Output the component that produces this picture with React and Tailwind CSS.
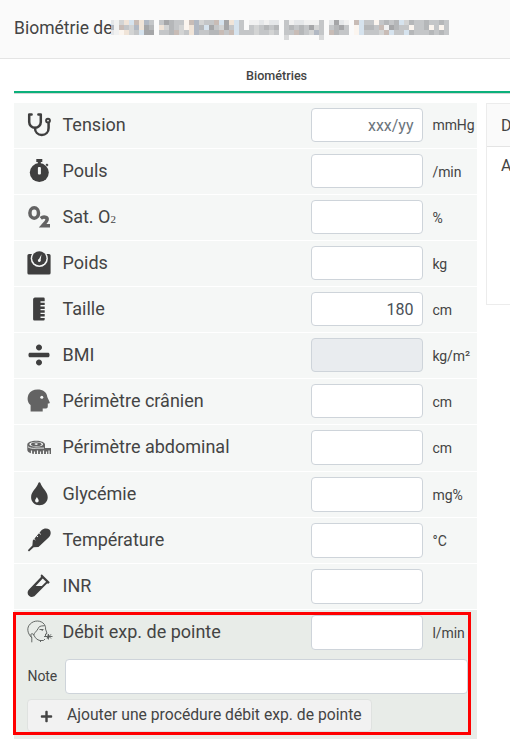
import React from 'react';
import { FaDivide, FaPlus } from 'react-icons/fa';

// Pixelated patient name, one letter per 5px cell
const mosaicColors = {
    a: '#f1f1f1', b: '#e5e7e9', c: '#d3d4d4', d: '#c4c6c8', e: '#b5b7b9', f: '#a5a6a8',
    p: '#f0e4d8', u: '#d6e3ee', t: '#c8bcb6', n: '#b1b8c3', w: '#fbf5ef',
};

const mosaic = [
    'acputpnd.dfeddwtncddtufpud.aababb.dabbaaad.bfba.tuddwdedeuceddedded',
    'atdcnpfe.pcedcwpneufdcfdud.dcdede.dededfcd.defd.wueedtafeddwddewdwd',
    'awpcduff.ddetcdpnddeetdtudddcddcd.ddtedcnd.tedd.wudddctudduedddeded',
];

const icons = {
    tension: (
        <svg width="24" height="24" viewBox="0 0 24 24" fill="none" stroke="currentColor" strokeWidth="2.5" strokeLinecap="round" strokeLinejoin="round">
            <path d="M4.600 1.500H2.200V9a5.800 5.800 0 0 0 11.600 0V1.500h-2.400" />
            <path d="M8 15c0 4 2.800 7 6.800 7s6.800-3 6.800-7v-4.500" />
            <circle cx="21" cy="7.600" r="1.900" strokeWidth="2" />
        </svg>
    ),
    pouls: (
        <svg width="24" height="24" viewBox="0 0 24 24" fill="currentColor">
            <path d="M9.300 0h6v3h-1.500v2h-3V3H9.300z" />
            <path d="m18.600 5.500 1.400-1 1.500 1.600-1.500 1.500z" />
            <circle cx="12.300" cy="13.600" r="9.500" />
            <rect x="10.900" y="8" width="3" height="7.500" rx="1" fill="#f5f7f6" />
        </svg>
    ),
    oxygen: (
        <svg width="24" height="24" viewBox="0 0 24 24" fill="none" stroke="#636363" strokeWidth="3.500">
            <ellipse cx="7.200" cy="8" rx="4.300" ry="5.200" />
            <path d="M13.800 13.400c2.600-2.200 6.800-1.400 6.300 1.300-.3 1.700-2.700 4-4.500 6.100h7.400" />
        </svg>
    ),
    poids: (
        <svg width="24" height="24" viewBox="0 0 24 24" fill="currentColor">
            <path d="M2 3h20a1.600 1.600 0 0 1 1.600 1.600V22a1.600 1.600 0 0 1-1.600 1.600H2A1.600 1.600 0 0 1 .4 22V4.600A1.600 1.600 0 0 1 2 3z" />
            <circle cx="12.300" cy="7.500" r="8.600" fill="#f5f7f6" />
            <circle cx="12.300" cy="7.300" r="7.100" />
            <path d="m14.500 3.200-.8 5.600a1.500 1.500 0 1 1-1.700-.8z" fill="#f5f7f6" />
        </svg>
    ),
    taille: (
        <svg width="24" height="24" viewBox="0 0 24 24" fill="currentColor">
            <path d="M7.300.5h9.200q1.200 0 1.200 1.200v2.600h-4.200v1.400h4.200v2.400h-4.200v1.400h4.200v2.400h-4.200v1.400h4.200v2.400h-4.200v1.400h4.200v2.400h-4.200v1.400h4.200v1.400q0 1.200-1.200 1.200H7.300q-1.200 0-1.200-1.200v-20q0-1.200 1.200-1.200z" />
        </svg>
    ),
    bmi: <FaDivide size={24} />,
    crane: (
        <svg width="24" height="24" viewBox="0 0 24 24" fill="#636363">
            <path d="M3.600 22.500v-6.500C0 13.500.2 8.500 1.500 5.500 3.200 2 6.500.5 10.500.5c5.500 0 9.400 2.600 9.800 7.400l2.400 5.400c.3.800-.2 1.200-1.900 1.200v2.700c0 1.800-1 2.400-2.800 2.400h-2.300v2.900z" />
            <circle cx="14.800" cy="8.300" r="1.500" fill="#f5f7f6" />
        </svg>
    ),
    abdomen: (
        <svg width="24" height="24" viewBox="0 0 24 24">
            <path d="M.3 9.600C.3 7.500 4.200 5.800 9.200 5.800S18 7.500 18 9.600v3.500h6V19H7.500C3 18.800.3 17 .3 14.800z" fill="#636363" />
            <ellipse cx="9.200" cy="9.300" rx="6.900" ry="2.500" fill="#f5f7f6" />
            <ellipse cx="9.200" cy="9.200" rx="5.200" ry="2" fill="#636363" />
            <ellipse cx="9.200" cy="9.100" rx="1.700" ry=".8" fill="#f5f7f6" />
            <path d="M1 11.800c2 1.400 5 1.900 8 1.300h8" fill="none" stroke="#f5f7f6" strokeWidth=".9" />
            <path d="M4.500 15.500V19M7.500 16.500V19M10.500 15.500V19M13.500 16.500V19M16.500 15.500V19M19.500 16.500V19M22 15.500V19" stroke="#f5f7f6" strokeWidth="1.200" />
        </svg>
    ),
    glycemie: (
        <svg width="24" height="24" viewBox="0 0 24 24" fill="currentColor">
            <path d="M12.400.2c.5 0 .8.300 1 .9 1.500 5 7.300 8.300 7.300 14.200 0 4.600-3.600 8-8.300 8s-8.300-3.400-8.300-8c0-5.900 5.800-9.200 7.300-14.200.2-.6.500-.9 1-.9z" />
            <path d="M9.900 14.900c.7 1.600 1.800 2.300 1.800 3.800a1.800 1.800 0 0 1-3.600 0c0-1.500 1.100-2.200 1.800-3.800z" fill="#f5f7f6" />
        </svg>
    ),
    temperature: (
        <svg width="24" height="24" viewBox="0 0 24 24" fill="currentColor">
            <path d="M14.500 2.200c2.200-2.200 5.800-2.400 7.800-.6 2 2 1.800 5.400-.4 7.600L11.500 18.900l-4.800.4-4.700 4.200-1.200-1.200 4.600-4.700.4-5z" />
            <path d="m9.200 7.300 1.800 1.700M12 4.700l1.800 1.700M6.500 10.200l1.800 1.700" stroke="#f5f7f6" strokeWidth="1" />
        </svg>
    ),
    inr: (
        <svg width="24" height="24" viewBox="0 0 24 24" fill="currentColor">
            <path d="m14.700.3 8.100 8-1.700 1.700-.8-.8L8.100 21.600c-2 2-4.500 1.800-6.100.2-1.800-1.600-1.900-4.400 0-6.300L14.200 2.800l-.8-.8z" />
            <path d="m15.700 4.400 3.400 3.300-4.300 4.300H8.700z" fill="#f5f7f6" />
        </svg>
    ),
    debit: (
        <svg width="26" height="24" viewBox="0 0 26 24" fill="none" stroke="#555957" strokeWidth=".9">
            <path d="M4.800 22.300v-4.500C0 13 -.4 7.500 3.200 4 7 0 14 0 17.300 4.300c1 1.500 1.500 3 1.200 4.700l1.500 4.300-1.500.7v1.500M4.800 17.800c-.3-1-1-2-1-3 0-1.700 3-1.200 3 .5 0-2.300 2.400-3.300 4.200-6.500.7-1.500 1-2.300 3.300-2.800l3.500-.3M7 15.300c1.300 2.700 3 4.700 6 5.200h3.500l1.500-1.500M13.500 22v-1.500M12.500 9.500h4" />
            <path d="m15 9.500.3 1.500M17 16.500h8.500M20 14.500l4 4M24 14.300l-4 4.500M21.500 14v5.500M18 15.200l3 2.800" />
        </svg>
    ),
};

const measures = [
    { icon: 'tension', label: 'Tension', unit: 'mmHg', placeholder: 'xxx/yy' },
    { icon: 'pouls', label: 'Pouls', unit: '/min' },
    { icon: 'oxygen', label: 'Sat. O', sub: '2', unit: '%' },
    { icon: 'poids', label: 'Poids', unit: 'kg' },
    { icon: 'taille', label: 'Taille', unit: 'cm', value: '180' },
    { icon: 'bmi', label: 'BMI', unit: 'kg/m²', disabled: true },
    { icon: 'crane', label: 'Périmètre crânien', unit: 'cm' },
    { icon: 'abdomen', label: 'Périmètre abdominal', unit: 'cm', height: 'h-[47px]', inputHeight: 'h-[35px]' },
    { icon: 'glycemie', label: 'Glycémie', unit: 'mg%', inputHeight: 'h-[35px]' },
    { icon: 'temperature', label: 'Température', unit: '°C', inputHeight: 'h-[35px]' },
    { icon: 'inr', label: 'INR', unit: '', inputHeight: 'h-[35px]' },
];

const Measure = ({ icon, label, sub, unit, value, placeholder, disabled, inputHeight = 'h-[34px]' }) => (
    <div className="flex items-start pt-[5px]">
        <div className="ml-[13px] mt-[5px] w-[35.500px] h-6 shrink-0 text-[#3f3f3f]">{icons[icon]}</div>
        <div className="w-[248.500px] shrink-0 whitespace-nowrap text-[18px] leading-[34px]">
            {label}
            {sub && <span className="font-['Liberation_Serif',serif] text-[11px]">{sub}</span>}
        </div>
        <input
            type="text"
            defaultValue={value}
            placeholder={placeholder}
            disabled={disabled}
            className={`${inputHeight} w-[112px] shrink-0 rounded border border-[#ced4da] bg-white pl-2 pr-[8.500px] text-right text-[16px] text-[#495057] placeholder:text-[#6c757d] disabled:bg-[#e9ecef]`}
        />
        <span className={`ml-[9.500px] whitespace-nowrap text-[14px] ${placeholder ? 'leading-[35px]' : 'leading-[37px]'} h-[35px] tracking-[-0.1px]`}>{unit}</span>
    </div>
);

const App = () => (
    <div className="h-[755px] w-[510px] overflow-hidden bg-white font-[Roboto,sans-serif] text-[#444]">
        <header className="flex h-[59px] items-start border-b border-[#e4e4e4] bg-[#fafafa] pl-[14px] pt-[16px]">
            <h1 className="w-[97px] shrink-0 whitespace-nowrap text-[17.500px] leading-6">Biométrie de</h1>
            <svg className="relative mt-1" width="338" height="20" viewBox="-3 0 338 20" shapeRendering="crispEdges">
                <path d="M-3 0h3v5h-3zM-3 10h3v5h-3z" fill="#e4e6e9" />
                <path d="M-3 5h3v5h-3z" fill="#b1b8c3" />
                {mosaic.map((row, y) =>
                    row.split('').map((cell, x) => cell !== '.' && (
                        <rect key={`${x}-${y}`} x={x * 5} y={y * 5} width="5" height="5" fill={mosaicColors[cell]} />
                    ))
                )}
                <path d="M170 15h5v5h-5zM205 15h5v5h-5z" fill="#d8d9da" />
            </svg>
        </header>

        <div className="ml-[14px] flex h-[34px] items-center border-b-2 border-[#0bb07b] pl-[232px] pt-[2px] text-[12.600px] font-medium shadow-[0_1px_0_#d0d8d5]">
            Biométries
        </div>

        <div className="mt-[10px] flex w-[600px] pl-[14px]">
            <div className="w-[463px] shrink-0">
                {measures.map((m) => (
                    <div key={m.icon} className={`${m.height || 'h-[46px]'} border-b border-white bg-[#f5f7f6]`}>
                        <Measure {...m} />
                    </div>
                ))}

                <div className="relative h-[129px] bg-[#e8ece8]">
                    <Measure icon="debit" label="Débit exp. de pointe" unit="l/min" inputHeight="h-[35px]" />
                    <div className="mt-[9px] flex items-center pl-[13.500px]">
                        <label className="w-[37.500px] text-[14px] tracking-[-0.1px]">Note</label>
                        <input type="text" className="h-[35px] w-[403px] rounded border border-[#ced4da] bg-white px-2 text-[16px]" />
                    </div>
                    <button className="ml-[13px] mt-[5px] flex h-[33px] w-[345px] items-center whitespace-nowrap rounded border border-[#dfe2e0] bg-[#f2f2f2] pl-3 text-[15.700px]">
                        <FaPlus size={13} className="mr-[14px] mt-[2px] shrink-0" />
                        <span className="-mt-[2px]">Ajouter une procédure débit exp. de pointe</span>
                    </button>
                    <div className="pointer-events-none absolute -left-px top-[2px] h-[123px] w-[458px] border-[3px] border-[#ff0000]" />
                </div>
            </div>

            <aside className="ml-[9px] h-[202px] w-[110px] border border-[#ececec] text-[16px]">
                <div className="h-[43px] border-b border-[#e4e4e4] bg-[#fafafa] pl-[14px] leading-[43px]">D</div>
                <div className="pl-[14px] leading-[38px]">A</div>
            </aside>
        </div>
    </div>
);

export default App;
